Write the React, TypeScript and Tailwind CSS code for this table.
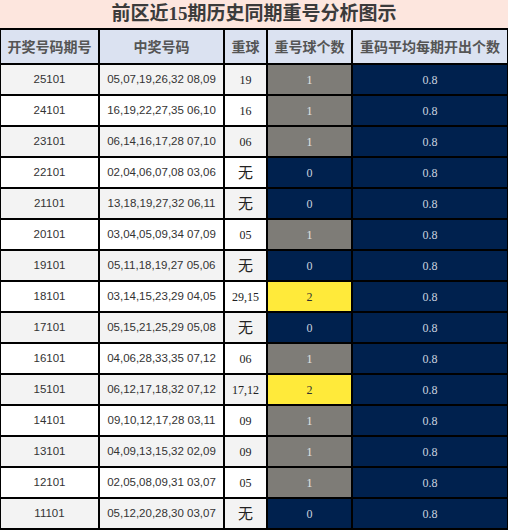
type Row = { issue: string; nums: string; ball: string; count: number };

const rows: Row[] = [
  { issue: "25101", nums: "05,07,19,26,32 08,09", ball: "19", count: 1 },
  { issue: "24101", nums: "16,19,22,27,35 06,10", ball: "16", count: 1 },
  { issue: "23101", nums: "06,14,16,17,28 07,10", ball: "06", count: 1 },
  { issue: "22101", nums: "02,04,06,07,08 03,06", ball: "无", count: 0 },
  { issue: "21101", nums: "13,18,19,27,32 06,11", ball: "无", count: 0 },
  { issue: "20101", nums: "03,04,05,09,34 07,09", ball: "05", count: 1 },
  { issue: "19101", nums: "05,11,18,19,27 05,06", ball: "无", count: 0 },
  { issue: "18101", nums: "03,14,15,23,29 04,05", ball: "29,15", count: 2 },
  { issue: "17101", nums: "05,15,21,25,29 05,08", ball: "无", count: 0 },
  { issue: "16101", nums: "04,06,28,33,35 07,12", ball: "06", count: 1 },
  { issue: "15101", nums: "06,12,17,18,32 07,12", ball: "17,12", count: 2 },
  { issue: "14101", nums: "09,10,12,17,28 03,11", ball: "09", count: 1 },
  { issue: "13101", nums: "04,09,13,15,32 02,09", ball: "09", count: 1 },
  { issue: "12101", nums: "02,05,08,09,31 03,07", ball: "05", count: 1 },
  { issue: "11101", nums: "05,12,20,28,30 03,07", ball: "无", count: 0 },
];

const headers = ["开奖号码期号", "中奖号码", "重球", "重号球个数", "重码平均每期开出个数"];

const countCell = (n: number) => {
  if (n === 2) return "bg-[#ffea3a] text-[#333]";
  if (n === 1) return "bg-[#7e7c77] text-[#e4e4e4]";
  return "bg-[#00214e] text-[#c9d1df]";
};

export default function App() {
  return (
    <div className="w-[508px] h-[530px] bg-black px-[1px] pb-[2px] grid grid-cols-[97px_123px_41px_83px_154px] grid-rows-[28px_33px_repeat(15,29px)] gap-[2px]">
      <div className="col-span-5 -mx-[1px] bg-[#fde6de] flex items-center justify-center pt-[1px] text-[19px] font-bold text-[#3b3b3b] [font-family:'Liberation_Serif','Noto_Sans_CJK_SC',serif]">
        前区近15期历史同期重号分析图示
      </div>
      {headers.map((h) => (
        <div
          key={h}
          className="bg-[#dbe2f1] flex items-center justify-center text-[14px] font-semibold text-[#555] [font-family:'Noto_Sans_CJK_SC',sans-serif]"
        >
          {h}
        </div>
      ))}
      {rows.map((r, i) => {
        const bg = i % 2 === 0 ? "bg-[#f3f3f3]" : "bg-white";
        return (
          <div key={r.issue} className="contents">
            <div className={`${bg} flex items-center justify-center text-[11.5px] text-[#333] [font-family:'Liberation_Sans',sans-serif]`}>
              {r.issue}
            </div>
            <div className={`${bg} flex items-center justify-center text-[11.5px] text-[#333] [font-family:'Liberation_Sans',sans-serif]`}>
              {r.nums}
            </div>
            <div
              className={`${bg} flex items-center justify-center text-[#222] ${
                r.ball === "无"
                  ? "text-[15px] [font-family:'Noto_Sans_CJK_SC',sans-serif]"
                  : "text-[12px] [font-family:'Liberation_Serif',serif]"
              }`}
            >
              {r.ball}
            </div>
            <div className={`${countCell(r.count)} flex items-center justify-center text-[12px] [font-family:'Liberation_Serif',serif]`}>
              {r.count}
            </div>
            <div className="bg-[#00214e] text-[#c9d1df] flex items-center justify-center text-[12px] [font-family:'Liberation_Serif',serif]">
              0.8
            </div>
          </div>
        );
      })}
    </div>
  );
}
